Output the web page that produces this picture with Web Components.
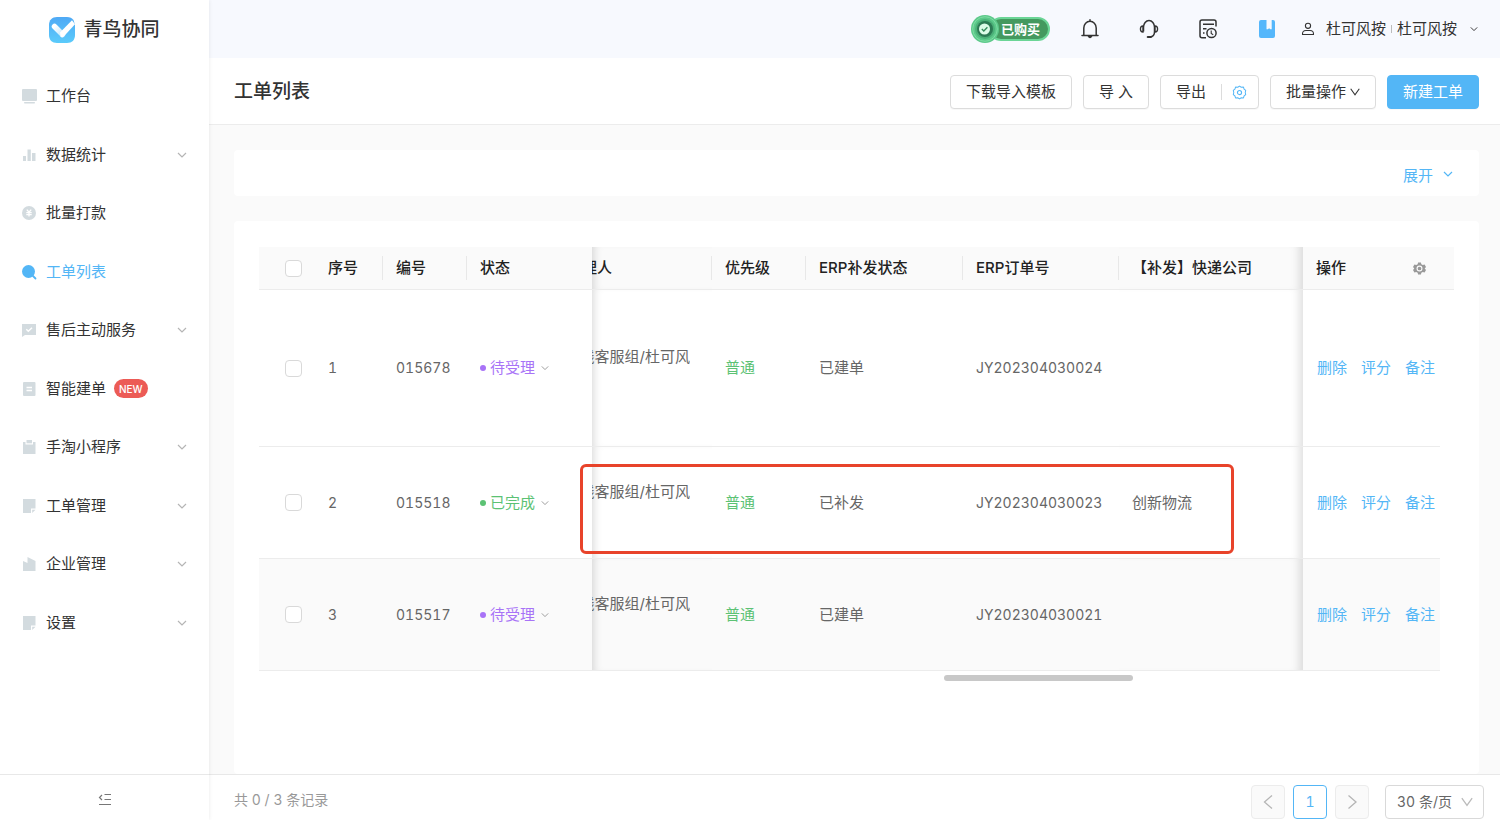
<!DOCTYPE html>
<html lang="zh-CN">
<head>
<meta charset="utf-8">
<title>工单列表 - 青鸟协同</title>
<style>
  html, body { margin: 0; height: 100%; }
  body {
    font: 15px/24px Inter, "Noto Sans CJK SC", sans-serif;
    font-variant-numeric: tabular-nums;
    color: #333;
    background: #fafafa;
  }
</style>
</head>
<body>
<app-shell>
  <side-nav slot="side">
    <nav-item icon="desk">工作台</nav-item>
    <nav-item icon="bars" sub>数据统计</nav-item>
    <nav-item icon="coin">批量打款</nav-item>
    <nav-item icon="search" active>工单列表</nav-item>
    <nav-item icon="service" sub>售后主动服务</nav-item>
    <nav-item icon="form" tag="NEW">智能建单</nav-item>
    <nav-item icon="clip" sub>手淘小程序</nav-item>
    <nav-item icon="note" sub>工单管理</nav-item>
    <nav-item icon="company" sub>企业管理</nav-item>
    <nav-item icon="note" sub>设置</nav-item>
  </side-nav>
  <top-bar></top-bar>
  <page-head heading="工单列表">
    <ui-button>下载导入模板</ui-button>
    <ui-button>导 入</ui-button>
    <export-button></export-button>
    <ui-button icon="caret">批量操作</ui-button>
    <ui-button primary>新建工单</ui-button>
  </page-head>
  <page-content>
    <filter-panel></filter-panel>
    <ticket-table></ticket-table>
  </page-content>
  <page-footer></page-footer>
</app-shell>

<script>
const ICONS = {
  logo: ['0 0 26 26', `<defs><linearGradient id="g" x1="0" y1="0" x2="0" y2="1"><stop offset="0" stop-color="#4fa9f5"/><stop offset="1" stop-color="#5bcbfb"/></linearGradient><linearGradient id="w" x1="0" y1="0" x2="1" y2="1"><stop offset="0" stop-color="#fff"/><stop offset="1" stop-color="#c4e8fd"/></linearGradient></defs><path d="M8 0h10c3 0 5 1 6.500 3L26 8v10c0 5-3 8-8 8H8c-5 0-8-3-8-8V8c0-5 3-8 8-8z" fill="url(#g)"/><path d="M5.500 9.500l8 8" stroke="url(#w)" stroke-width="5.500" stroke-linecap="round"/><path d="M11 15.500L23 3.200l3 4-11.500 12.500q-1.500 1.300-3 0z" fill="#fff"/>`],
  desk: ['0 0 16 16', '<rect x="1" y="1" width="15" height="12" rx="1" fill="currentColor"/><rect x="3" y="14" width="11" height="1.500" rx=".7" fill="currentColor"/>'],
  bars: ['0 0 16 16', '<path d="M2 9h3v5H2zM6.500 2.500h3.300V14H6.500zM11 6h3.500v8H11z" fill="currentColor"/>'],
  coin: ['0 0 16 16', '<circle cx="8" cy="8" r="7" fill="currentColor"/><path d="M5.800 4.600L8 7.200l2.200-2.600M5.300 7.700h5.400M5.300 9.700h5.400M8 7.200v4.300" stroke="#fff" stroke-width="1.300" fill="none"/>'],
  search: ['0 0 16 16', '<circle cx="7.500" cy="7.500" r="6.500" fill="currentColor"/><path d="M11.500 11.500l3 3" stroke="currentColor" stroke-width="1.800" stroke-linecap="round"/>'],
  service: ['0 0 16 16', '<path d="M1 2h14v11H4L1 15z" fill="currentColor"/><path d="M5.300 7.300l2 2 3.700-3.600" stroke="#fff" stroke-width="1.400" fill="none"/>'],
  form: ['0 0 16 16', '<rect x="2" y="1" width="12.500" height="14" rx="1" fill="currentColor"/><path d="M5.500 6.500h5.500M5.500 9.500h5.500" stroke="#fff" stroke-width="1.300"/>'],
  clip: ['0 0 16 16', '<path d="M2 3h2.500v2.500h7.500V3h2.500v12H2z" fill="currentColor"/><rect x="5.500" y="1" width="5.500" height="3.300" fill="currentColor"/>'],
  note: ['0 0 16 16', '<path d="M2 1h12.500v9.500H10V15H2z" fill="currentColor"/><path d="M11.200 11.700h3.300L11.200 15z" fill="currentColor"/>'],
  company: ['0 0 16 16', '<path d="M2 5l4.500 2V1l8 4v10H2z" fill="currentColor"/>'],
  down: ['0 0 10 10', '<path d="M1 3l4 4 4-4" stroke="currentColor" stroke-width="1.200" fill="none"/>'],
  caret: ['0 0 10 10', '<path d="M.7 1.800L5 7.800l4.300-6" stroke="currentColor" stroke-width="1.100" fill="none"/>'],
  prev: ['0 0 16 16', '<path d="M12 1.500L4.500 8l7.500 6.500" stroke="currentColor" stroke-width="1.300" fill="none"/>'],
  next: ['0 0 16 16', '<path d="M4.500 1.500L12 8l-7.500 6.500" stroke="currentColor" stroke-width="1.300" fill="none"/>'],
  fold: ['0 0 14 14', '<path d="M6.500 1.500h6.500M6.500 6.500h6.500M1 11.500h12M4 2L1.500 4.500 4 7" stroke="currentColor" stroke-width="1.200" fill="none"/>'],
  bell: ['0 0 20 20', '<path d="M10 .8v1.500M3.800 16V9a6.200 6.700 0 0 1 12.400 0v7M2 16.500h16" stroke="currentColor" stroke-width="1.500" stroke-linecap="round" fill="none"/><path d="M7.500 17q2.500 4.500 5 0z" fill="currentColor"/>'],
  headset: ['0 0 20 20', '<path d="M4.500 12.500V8a5.500 6.500 0 0 1 11 0v5c0 3-1.500 4.700-4.500 5" stroke="currentColor" stroke-width="1.500" fill="none"/><path d="M4 6.800Q1.400 7 1.400 10T4 13zM16 6.800q2.600.2 2.600 3.200T16 13z" stroke="currentColor" stroke-width="1.300" fill="none"/><path d="M8.800 18h3" stroke="currentColor" stroke-width="2.200" stroke-linecap="round"/>'],
  record: ['0 0 20 20', '<path d="M8 18.800H4q-2 0-2-2V3q0-2 2-2h12q2 0 2 2v4.500M5 5.300h11M5 9.800h3.500M5 14h1.500" stroke="currentColor" stroke-width="1.500" fill="none"/><circle cx="13.500" cy="14" r="4.600" stroke="currentColor" stroke-width="1.500" fill="none"/><path d="M13.200 11.500v3l2 1.200" stroke="currentColor" stroke-width="1.100" fill="none"/>'],
  book: ['0 0 20 20', '<path d="M4 1h5.500v9.300h1.300l1.300-1 1.300 1h1.300V1H16q2 0 2 2v14q0 2-2 2H4q-2 0-2-2V3q0-2 2-2z" fill="currentColor"/>'],
  user: ['0 0 14 14', '<circle cx="7" cy="3.800" r="2.600" stroke="currentColor" stroke-width="1.100" fill="none"/><path d="M1.500 12.500q-.3-4 3.500-4h4q3.800 0 3.500 4z" stroke="currentColor" stroke-width="1.100" stroke-linejoin="round" fill="none"/>'],
  gear: ['0 0 16 16', '<path d="M8 1.200l1.900 1.200 2.300-.2.700 2.100 1.700 1.400L14.100 8l.5 2.300-1.700 1.400-.7 2.100-2.300-.2L8 14.800l-1.900-1.200-2.300.2-.7-2.100-1.700-1.400L1.900 8l-.5-2.300 1.700-1.400.7-2.100 2.300.2z" stroke="currentColor" stroke-width="1.100" stroke-linejoin="round" fill="none"/><circle cx="8" cy="8" r="2.200" stroke="currentColor" stroke-width="1.200" fill="none"/>'],
  cog: ['1 1 14 14', '<path d="M6.500 1.500h3l.5 2 1.500.8 2-.6L15 6.300 13.600 8l1.400 1.700-1.500 2.600-2-.6-1.500.8-.5 2h-3l-.5-2-1.500-.8-2 .6L1 9.700 2.400 8 1 6.300l1.500-2.600 2 .6 1.500-.8z" fill="currentColor"/><circle cx="8" cy="8" r="2.600" fill="none" stroke="#fafafa" stroke-width="1.200"/>'],
  medal: ['0 0 28 28', '<circle cx="14" cy="14" r="14" fill="#5cc98a"/><circle cx="14" cy="14" r="12.300" fill="none" stroke="#7fdca4" stroke-width="1"/><circle cx="14" cy="14" r="10" fill="#4bb078"/><circle cx="14" cy="14" r="8" fill="#2c7a54"/><circle cx="13.500" cy="14" r="5.500" fill="#dcfbe8"/><path d="M10.800 14l2 2 3.600-3.800" stroke="#33895a" stroke-width="1.300" fill="none"/>']
};

class Base extends HTMLElement {
  connectedCallback() {
    if (this.shadowRoot) return;
    this.attachShadow({ mode: 'open' }).innerHTML =
      `<style>*{box-sizing:border-box}button,select{font:inherit;color:inherit;cursor:pointer}a{text-decoration:none}${this.css()}</style>${this.html()}`;
  }
}
const define = (name, css, html) => customElements.define(name, class extends Base {
  css() { return css; }
  html() { return typeof html === 'function' ? html(this) : html; }
});

define('ui-icon', ':host{display:inline-flex;flex:none;width:16px;height:16px}svg{width:100%;height:100%;display:block}', el => {
  const [box, shape] = ICONS[el.getAttribute('name')];
  return `<svg viewBox="${box}" aria-hidden="true">${shape}</svg>`;
});

define('app-shell', `
  :host{display:grid;grid-template-columns:209px minmax(0,1fr);height:100vh;overflow:hidden}
  ::slotted(side-nav){z-index:1}
  main{display:flex;flex-direction:column;min-width:0;min-height:0}
`, '<slot name="side"></slot><main><slot></slot></main>');

define('side-nav', `
  :host{display:flex;flex-direction:column;min-height:0;background:#fff;box-shadow:0 0 4px rgba(0,0,0,.09)}
  .brand{display:flex;align-items:center;justify-content:center;gap:8px;height:60px;margin-bottom:7px;flex:none;font-size:19px;font-weight:500}
  .brand ui-icon{width:26px;height:26px}
  nav{display:grid;grid-auto-rows:1fr;height:585px;flex:none}
  .fold{margin-top:auto;height:46px;flex:none;display:grid;place-items:center;padding:4px 0 0;border:0;border-top:1px solid #e8e8e8;background:#fff;color:#777}
  .fold ui-icon{width:14px;height:14px}
`, `<div class="brand"><ui-icon name="logo"></ui-icon><span>青鸟协同</span></div>
  <nav><slot></slot></nav>
  <button class="fold" aria-label="收起菜单"><ui-icon name="fold"></ui-icon></button>`);

define('nav-item', `
  :host{display:block}
  a{display:flex;align-items:center;height:100%;padding:0 22px 0 21px;color:#333}
  ui-icon{color:#d3dbdf;margin-right:9px}
  .arrow{width:10px;height:10px;margin:0 0 0 auto;color:#b5b5b5}
  :host([active]) a,:host([active]) ui-icon{color:#53b6f6}
  b{margin-left:8px;padding:0 5px;height:19px;border-radius:10px;background:#ec5b56;color:#fff;font-size:10px;line-height:20px;font-weight:500}
`, el => `<a href="#"><ui-icon name="${el.getAttribute('icon')}"></ui-icon><slot></slot>
  ${el.hasAttribute('tag') ? `<b>${el.getAttribute('tag')}</b>` : ''}
  ${el.hasAttribute('sub') ? '<ui-icon class="arrow" name="down"></ui-icon>' : ''}</a>`);

define('top-bar', `
  :host{display:flex;flex:none;align-items:center;justify-content:flex-end;height:58px;padding-right:22px;background:#f7f9fe}
  button{border:0;background:none;padding:0;display:flex;align-items:center}
  .tool{margin-left:39px}
  .tool ui-icon{width:20px;height:20px}
  .bought{margin-right:-9px}
  .bought ui-icon{width:28px;height:28px;z-index:1}
  .bought span{height:24px;margin-left:-10px;padding:0 8px 0 10px;border:2px solid #6bd596;border-radius:12px;background:#44995f;color:#fff;font-size:13px;line-height:20px;font-weight:700}
  .blue{color:#55b7fb;margin-right:24px}
  .user{gap:5px}
  .user ui-icon{width:14px;height:14px;margin-right:6px}
  .user i{width:1px;height:8px;background:#bbb}
  .user ui-icon.arrow{width:8px;height:8px;margin:0 0 0 8px}
`, `<button class="bought"><ui-icon name="medal"></ui-icon><span>已购买</span></button>
  <button class="tool" aria-label="消息"><ui-icon name="bell"></ui-icon></button>
  <button class="tool" aria-label="客服"><ui-icon name="headset"></ui-icon></button>
  <button class="tool" aria-label="记录"><ui-icon name="record"></ui-icon></button>
  <button class="tool blue" aria-label="手册"><ui-icon name="book"></ui-icon></button>
  <button class="user"><ui-icon name="user"></ui-icon><span>杜可风按</span><i></i><span>杜可风按</span><ui-icon class="arrow" name="down"></ui-icon></button>`);

define('page-head', `
  :host{display:flex;flex:none;align-items:center;height:67px;padding:2px 21px 0 25px;background:#fff;border-bottom:1px solid #ececec;box-sizing:border-box}
  h1{margin:0 auto 0 0;font-size:19px;font-weight:500}
  div{display:flex;gap:11px}
`, el => `<h1>${el.getAttribute('heading')}</h1><div><slot></slot></div>`);

define('ui-button', `
  :host{display:block}
  button{display:flex;align-items:center;gap:4px;height:34px;padding:0 15px;border:1px solid #dcdcdc;border-radius:4px;background:#fff;white-space:nowrap;box-shadow:0 1px 1px rgba(0,0,0,.03)}
  ui-icon{width:10px;height:10px}
  :host([primary]) button{background:#53b6f6;border-color:#53b6f6;color:#fff}
`, el => `<button><slot></slot>${el.hasAttribute('icon') ? `<ui-icon name="${el.getAttribute('icon')}"></ui-icon>` : ''}</button>`);

define('export-button', `
  :host{display:flex;align-items:center;height:34px;border:1px solid #dcdcdc;border-radius:4px;background:#fff;box-sizing:border-box;box-shadow:0 1px 1px rgba(0,0,0,.03)}
  button{display:flex;align-items:center;border:0;background:none;padding:0 15px}
  .set{height:16px;padding:0 11px 0 10px;border-left:1px solid #dcdcdc;color:#53b6f6}
  ui-icon{width:15px;height:15px}
`, '<button>导出</button><button class="set" aria-label="导出设置"><ui-icon name="gear"></ui-icon></button>');

define('page-content', `
  :host{display:flex;flex-direction:column;flex:1;min-height:0;gap:25px;padding:25px 21px 0 25px;background:#fafafa}
`, '<slot></slot>');

define('filter-panel', `
  :host{display:flex;flex:none;justify-content:flex-end;align-items:center;height:46px;padding:6px 26px 0 0;background:#fff;border-radius:4px;box-sizing:border-box}
  button{display:flex;align-items:center;gap:10px;border:0;background:none;padding:0;color:#53b6f6}
  ui-icon{width:10px;height:10px;margin-bottom:4px}
`, '<button>展开<ui-icon name="down"></ui-icon></button>');

const TICKETS = [
  { no: 1, id: '015678', state: '待受理', cls: 'wait', erp: '已建单', order: 'JY202304030024', ship: '' },
  { no: 2, id: '015518', state: '已完成', cls: 'done', erp: '已补发', order: 'JY202304030023', ship: '创新物流' },
  { no: 3, id: '015517', state: '待受理', cls: 'wait', erp: '已建单', order: 'JY202304030021', ship: '' }
];

define('ticket-table', `
  :host{display:block;flex:1;min-height:0;padding:26px 25px 0;background:#fff;border-radius:4px}
  .wrap{position:relative}
  table{width:100%;table-layout:fixed;border-collapse:separate;border-spacing:0}
  th,td{padding:0 0 0 13px;text-align:left;white-space:nowrap;border-bottom:1px solid #ececec;vertical-align:middle}
  th{height:43px;background:#fafafa;color:#222;font-weight:500}
  th.line{background:linear-gradient(#e8e8e8,#e8e8e8) 100% 50%/1px 24px no-repeat #fafafa}
  td{height:112px;color:#666}
  td.num{font-size:14px}
  tr.tall td{height:157px}
  tr.shade td:not(.end){background:#fafafa}
  td.end{border:0}
  .check{padding-left:26px}
  input{appearance:none;display:block;width:17px;height:17px;margin:0;border:1px solid #d9d9d9;border-radius:4px;background:#fff}
  .hand{padding:0 22px 0 0}
  .hand div{display:flex;justify-content:flex-end;overflow:hidden}
  th.hand{padding-right:100px}
  td.hand div{padding-bottom:22px}
  .cast-r{box-shadow:inset 8px 0 8px -6px rgba(0,0,0,.15)}
  .cast-l{box-shadow:inset -10px 0 8px -6px rgba(0,0,0,.12)}
  .state{display:flex;align-items:center;gap:4px;padding:0;border:0;background:none}
  .state i{width:6px;height:6px;border-radius:50%;background:currentColor}
  .state ui-icon{width:8px;height:8px;margin-left:2px;color:#999}
  .wait{color:#a873f7}.done,td.level{color:#5cc274}
  a{color:#53b6f6;margin-right:14px}
  td.ops{padding-left:14px}
  .opshead{display:flex;align-items:center;justify-content:space-between;padding-right:14px}
  .opshead button{display:flex;padding:0;border:0;background:none;color:#999}
  .opshead ui-icon{width:13px;height:13px}
  .mark{position:absolute;left:321px;top:217px;width:654px;height:90px;border:3px solid #e8432a;border-radius:6px;pointer-events:none}
  .track{margin:4px 14px 0 0}
  .thumb{margin-left:58%;width:16%;height:6px;border-radius:3px;background:#c8c8c8}
`, () => `<div class="wrap"><table>
  <colgroup><col style="width:56px"><col style="width:68px"><col style="width:84px"><col style="width:125px"><col style="width:120px"><col style="width:94px"><col style="width:157px"><col style="width:156px"><col><col style="width:137px"><col style="width:14px"></colgroup>
  <thead><tr><th class="check"><input type="checkbox" aria-label="全选"></th><th class="line">序号</th><th class="line">编号</th><th>状态</th>
  <th class="hand line cast-r"><div><span>理人</span></div></th><th class="line">优先级</th><th class="line">ERP补发状态</th><th class="line">ERP订单号</th><th class="cast-l">【补发】快递公司</th>
  <th class="ops"><div class="opshead">操作<button aria-label="列设置"><ui-icon name="cog"></ui-icon></button></div></th><th></th></tr></thead>
  <tbody>${TICKETS.map((t, i) => `<tr class="${['tall', '', 'shade'][i]}">
    <td class="check"><input type="checkbox" aria-label="选择 ${t.id}"></td><td class="num">${t.no}</td><td class="num">${t.id}</td>
    <td><button class="state ${t.cls}"><i></i>${t.state}<ui-icon name="down"></ui-icon></button></td>
    <td class="hand cast-r"><div><span>线客服组/杜可风</span></div></td><td class="level">普通</td><td>${t.erp}</td><td class="num">${t.order}</td><td class="cast-l">${t.ship}</td>
    <td class="ops"><a href="#">删除</a><a href="#">评分</a><a href="#">备注</a></td><td class="end"></td></tr>`).join('')}</tbody></table>
  <div class="mark"></div></div>
  <div class="track"><div class="thumb"></div></div>`);

define('page-footer', `
  :host{display:flex;flex:none;align-items:flex-start;height:46px;padding:10px 16px 0 25px;background:#fff;border-top:1px solid #e8e8e8;box-sizing:border-box;color:#999;font-size:14px}
  p{margin:3px auto 0 0}
  button{display:grid;place-items:center;width:34px;height:34px;margin-right:8px;padding:0;border:1px solid #ececec;border-radius:4px;background:#fafafa;color:#b5b5b5}
  button.on{border-color:#53b6f6;background:#fff;color:#53b6f6}
  .size{display:grid;align-items:center;margin-left:8px}
  select{grid-area:1/1;appearance:none;width:99px;height:34px;padding:0 11px;border:1px solid #d9d9d9;border-radius:4px;background:#fff;color:#666}
  .size ui-icon{grid-area:1/1;justify-self:end;width:12px;height:12px;margin-right:11px;color:#bbb;pointer-events:none}
`, `<p>共 0 / 3 条记录</p>
  <button aria-label="上一页"><ui-icon name="prev"></ui-icon></button><button class="on">1</button><button aria-label="下一页"><ui-icon name="next"></ui-icon></button>
  <label class="size"><select aria-label="每页条数"><option>30 条/页</option></select><ui-icon name="caret"></ui-icon></label>`);
</script>
</body>
</html>
